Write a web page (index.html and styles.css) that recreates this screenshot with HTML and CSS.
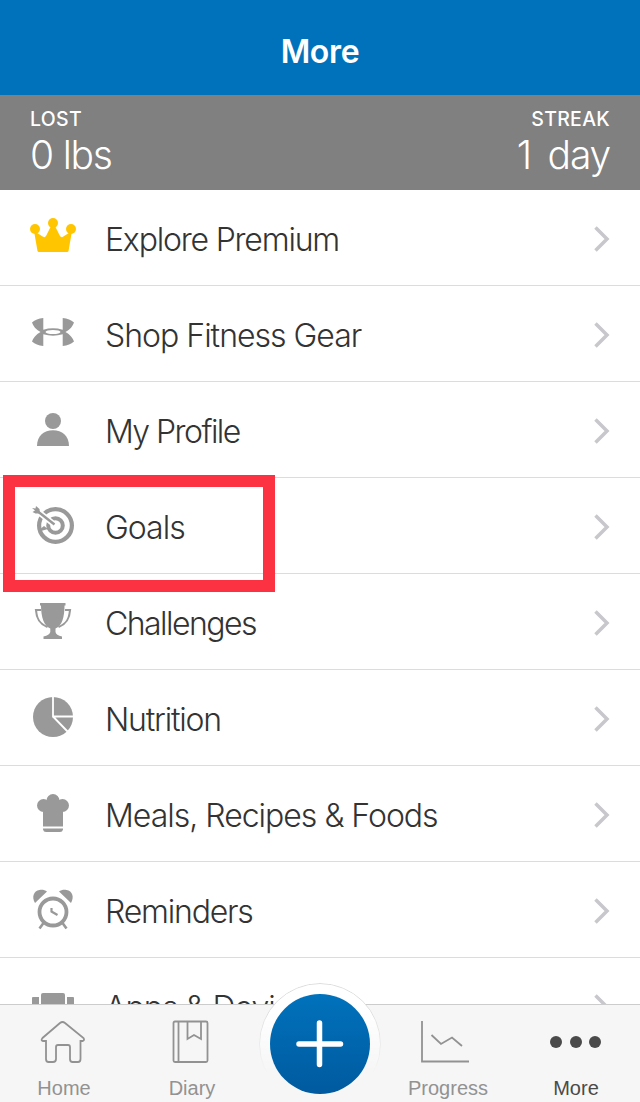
FILE: index.html
```html
<!DOCTYPE html>
<html lang="en">
<head>
<meta charset="UTF-8">
<meta name="viewport" content="width=device-width, initial-scale=1.0">
<title>More</title>
<link rel="stylesheet" href="styles.css">
</head>
<body>
<div class="app">
  <header class="navbar">
    <h1>More</h1>
  </header>

  <section class="stats">
    <div class="stat">
      <span class="stat-label">LOST</span>
      <span class="stat-value">0 lbs</span>
    </div>
    <div class="stat stat-right">
      <span class="stat-label">STREAK</span>
      <span class="stat-value">1 day</span>
    </div>
  </section>

  <main class="menu">
    <a class="row">
      <svg class="icon premium" viewBox="0 0 50 50">
        <circle cx="7" cy="18" r="5"/><circle cx="25" cy="12" r="5"/><circle cx="43" cy="18" r="5"/>
        <path d="M6 20L9.500 40Q9.700 41 11 41H39Q40.300 41 40.500 40L44 20L34.500 26Q33 26.500 32 25L27 15H23L18 25Q17 26.500 15.500 26Z"/>
      </svg>
      <span class="row-label">Explore Premium</span>
      <svg class="chevron" viewBox="0 0 16 26"><path d="M1.500 1.500L13 13L1.500 24.500"/></svg>
    </a>
    <a class="row">
      <svg class="icon" viewBox="0 0 50 50">
        <path d="M15.300 11C10.500 11.500 7 13 4 15.500C5 19 8 22.500 12.500 25C8 27.500 5 31 4 34.500C7 37 10.500 38.500 15.300 39V27.300Q25 30 34.700 27.300V39C39.500 38.500 43 37 46 34.500C45 31 42 27.500 37.500 25C42 22.500 45 19 46 15.500C43 13 39.500 11.500 34.700 11V22.700Q25 20 15.300 22.700Z"/>
        <ellipse class="hole" cx="25" cy="25" rx="7.500" ry="2"/>
      </svg>
      <span class="row-label wide">Shop Fitness Gear</span>
      <svg class="chevron" viewBox="0 0 16 26"><path d="M1.500 1.500L13 13L1.500 24.500"/></svg>
    </a>
    <a class="row">
      <svg class="icon" viewBox="0 0 50 50">
        <circle cx="25" cy="18" r="8"/>
        <path d="M9 43C9 33 16 27.300 25 27.300S41 33 41 43Z"/>
      </svg>
      <span class="row-label tight">My Profile</span>
      <svg class="chevron" viewBox="0 0 16 26"><path d="M1.500 1.500L13 13L1.500 24.500"/></svg>
    </a>
    <a class="row highlighted">
      <svg class="icon" viewBox="0 0 50 50">
        <circle class="line" cx="27.500" cy="26.500" r="16.400" stroke-width="4.200"/>
        <circle class="line" cx="27.500" cy="26.500" r="7.300" stroke-width="4"/>
        <path class="gap" d="M8 11L25 24.500" stroke-width="6"/>
        <path class="line" d="M8 11L26.500 25.500" stroke-width="2.400"/>
        <path d="M4 9L7.500 9.500L8 7L11.500 10L12 14.500L7.500 14.500L4.500 13L7 11.500Z"/>
        <path d="M11 31L16 27L20 30L13 32Z"/>
      </svg>
      <span class="row-label wide">Goals</span>
      <svg class="chevron" viewBox="0 0 16 26"><path d="M1.500 1.500L13 13L1.500 24.500"/></svg>
    </a>
    <a class="row">
      <svg class="icon" viewBox="0 0 50 50">
        <path d="M12 8H37.500V10.500H36.500C36.500 22 34 31 27.500 33.500V37Q28 40 34 41.500V44H15.500V41.500Q21.500 40 22.300 37V33.500C16 31 13 22 13 10.500H12Z"/>
        <path class="line" d="M13 15H8C8.500 24 11.500 29 19.500 32M37 15H42C41.500 24 38.500 29 30.500 32" stroke-width="2.200"/>
      </svg>
      <span class="row-label tight">Challenges</span>
      <svg class="chevron" viewBox="0 0 16 26"><path d="M1.500 1.500L13 13L1.500 24.500"/></svg>
    </a>
    <a class="row">
      <svg class="icon" viewBox="0 0 50 50">
        <circle cx="25" cy="26" r="20"/>
        <path class="gap" d="M25 5V25.500H46M25 25.500L41 42" stroke-width="1.800"/>
      </svg>
      <span class="row-label">Nutrition</span>
      <svg class="chevron" viewBox="0 0 16 26"><path d="M1.500 1.500L13 13L1.500 24.500"/></svg>
    </a>
    <a class="row">
      <svg class="icon" viewBox="0 0 50 50">
        <circle cx="15.500" cy="18.500" r="6.500"/><circle cx="25" cy="13.500" r="6.500"/><circle cx="34.500" cy="18.500" r="6.500"/>
        <path d="M15 15H35V39.500H15ZM15 41.500H35V42.500Q34.500 45 32 45H18Q15.500 45 15 42.500Z"/>
      </svg>
      <span class="row-label wide">Meals, Recipes &amp; Foods</span>
      <svg class="chevron" viewBox="0 0 16 26"><path d="M1.500 1.500L13 13L1.500 24.500"/></svg>
    </a>
    <a class="row">
      <svg class="icon" viewBox="0 0 50 50">
        <circle class="line" cx="25" cy="29" r="13.500" stroke-width="3.800"/>
        <path d="M7 20C3.500 14 5.500 8 11.500 7C14 6.500 17 7 19 8.500ZM43 20C46.500 14 44.500 8 38.500 7C36 6.500 33 7 31 8.500Z"/>
        <path class="line" d="M15.500 40L11.500 45.500M34.500 40L38.500 45.500" stroke-width="2.600"/>
        <path class="line" d="M23.500 25V28.500L29.500 32" stroke-width="2.200"/>
      </svg>
      <span class="row-label">Reminders</span>
      <svg class="chevron" viewBox="0 0 16 26"><path d="M1.500 1.500L13 13L1.500 24.500"/></svg>
    </a>
    <a class="row">
      <svg class="icon" viewBox="0 0 50 50">
        <rect x="13" y="14" width="24" height="26" rx="2"/>
        <path d="M5 18H11V36H5Q4 36 4 35V19Q4 18 5 18ZM39 18H45Q46 18 46 19V35Q46 36 45 36H39Z"/>
      </svg>
      <span class="row-label wide">Apps &amp; Devices</span>
      <svg class="chevron" viewBox="0 0 16 26"><path d="M1.500 1.500L13 13L1.500 24.500"/></svg>
    </a>
  </main>

  <nav class="tabbar">
    <a class="tab">
      <svg class="tab-icon" viewBox="0 0 56 50">
        <path d="M8 26Q5.500 25.500 7.500 23L25 8Q27.500 6 30 8L48.500 23Q50 25.500 47.500 26H45.500V44Q45.500 47 43 47H37.500Q35 47 35 44V32Q35 30 33 30H23Q21 30 21 32V44Q21 47 18 47H13.500Q11 47 11 44V26Z"/>
      </svg>
      <span class="tab-label">Home</span>
    </a>
    <a class="tab">
      <svg class="tab-icon" viewBox="0 0 56 50">
        <path d="M12 6.500H43Q44.500 6.500 44.500 8V45.500Q44.500 47 43 47H12Q10.500 47 10.500 45.500V8Q10.500 6.500 12 6.500ZM15.500 6.500V47M24.500 6.500V24L31 20L38 24V6.500"/>
      </svg>
      <span class="tab-label">Diary</span>
    </a>
    <a class="tab tab-add">
      <span class="add-ring"></span>
      <svg class="add-button" viewBox="0 0 100 100">
        <defs>
          <linearGradient id="addFill" x1="0" y1="0" x2="0" y2="1">
            <stop offset="0" stop-color="#0072bc"/>
            <stop offset="1" stop-color="#005a9f"/>
          </linearGradient>
        </defs>
        <circle cx="50" cy="50" r="50" fill="url(#addFill)"/>
        <path class="plus" d="M49.500 29V70.500M29 50H70.500"/>
      </svg>
    </a>
    <a class="tab">
      <svg class="tab-icon" viewBox="0 0 56 50">
        <path d="M3 6V46.500H50M12.500 20L22 29L33 22.500L43 31"/>
      </svg>
      <span class="tab-label">Progress</span>
    </a>
    <a class="tab active">
      <svg class="tab-icon" viewBox="0 0 56 50">
        <circle cx="8" cy="27" r="6"/><circle cx="28" cy="27" r="6"/><circle cx="47" cy="27" r="6"/>
      </svg>
      <span class="tab-label">More</span>
    </a>
  </nav>
</div>
</body>
</html>
```
FILE: styles.css
```css
* {
  box-sizing: border-box;
}

body {
  margin: 0;
  background-color: #fff;
  font-family: Inter, "Liberation Sans", Arial, sans-serif;
  color: #333;
}

.app {
  display: flex;
  flex-direction: column;
  width: 640px;
  height: 1102px;
  overflow: hidden;
}

.navbar {
  flex: none;
  display: flex;
  align-items: center;
  justify-content: center;
  height: 95px;
  padding-top: 8px;
  background-color: #0072bc;
}

.navbar h1 {
  margin: 0;
  font-size: 32px;
  font-weight: 600;
  letter-spacing: -0.3px;
  color: #fff;
}

.stats {
  flex: none;
  display: flex;
  justify-content: space-between;
  height: 95px;
  padding: 12px 30px 0;
  background-color: #808080;
  color: #fff;
}

.stat {
  display: flex;
  flex-direction: column;
}

.stat-right {
  align-items: flex-end;
}

.stat-label {
  font-size: 19.5px;
  font-weight: 500;
  line-height: 24px;
  letter-spacing: 0.3px;
}

.stat-value {
  font-size: 39px;
  font-weight: 300;
  line-height: 48px;
  letter-spacing: -1.2px;
}

.stat-right .stat-value {
  word-spacing: 7px;
}

.menu {
  flex: 1;
  min-height: 0;
  overflow: hidden;
}

.row {
  display: flex;
  align-items: center;
  height: 96px;
  padding: 0 30px 0 28px;
  border-bottom: 1px solid #dcdcdc;
}

.icon {
  width: 50px;
  height: 50px;
  margin-top: -3px;
  margin-right: 27px;
  fill: #999;
}

.icon.premium {
  fill: #ffc600;
}

.icon .line {
  fill: none;
  stroke: #999;
}

.icon .gap {
  fill: none;
  stroke: #fff;
}

.icon .hole {
  fill: #fff;
}

.row-label {
  flex: 1;
  padding-top: 3px;
  font-size: 32px;
  font-weight: 300;
  letter-spacing: -1.2px;
  white-space: nowrap;
}

.row-label.wide {
  letter-spacing: -1px;
}

.row-label.tight {
  letter-spacing: -1.55px;
}

.chevron {
  width: 16px;
  height: 26px;
  margin-top: 3px;
  fill: none;
  stroke: #c7c7cc;
  stroke-width: 3.5;
}

/* red frame around the Goals row */
.highlighted {
  position: relative;
}

.highlighted::before {
  content: "";
  box-sizing: border-box;
  position: absolute;
  top: -3px;
  left: 3px;
  width: 272px;
  height: 117px;
  border: 12px solid #fc3242;
}

.tabbar {
  flex: none;
  display: flex;
  height: 98px;
  background-color: #f6f6f6;
  border-top: 1px solid #ccc;
  position: relative;
}

.tab {
  flex: 1;
  display: flex;
  flex-direction: column;
  align-items: center;
  padding-top: 10px;
  color: #929292;
}

.tab-icon {
  width: 56px;
  height: 50px;
  margin-left: -2px;
  fill: none;
  stroke: #929292;
  stroke-width: 1.8;
}

.tab-label {
  padding-top: 11px;
  font-family: "Liberation Sans", Arial, sans-serif;
  font-size: 20px;
  line-height: 24px;
}

.tab.active {
  color: #4a4a4a;
}

.tab.active .tab-icon {
  margin-left: 0;
  fill: #4a4a4a;
  stroke: none;
}

.tab-add {
  position: relative;
}

/* white ring fades out towards the bottom of the bar */
.add-ring {
  position: absolute;
  top: -22px;
  left: 3px;
  width: 122px;
  height: 122px;
  border: 1px solid #ddd;
  border-radius: 50%;
  background-color: #fff;
  -webkit-mask-image: linear-gradient(#000 20%, transparent 75%);
  mask-image: linear-gradient(#000 20%, transparent 75%);
}

.add-button {
  position: absolute;
  top: -11px;
  left: 14px;
  width: 100px;
  height: 100px;
}

.plus {
  fill: none;
  stroke: #fff;
  stroke-width: 5.5;
  stroke-linecap: round;
}
```
